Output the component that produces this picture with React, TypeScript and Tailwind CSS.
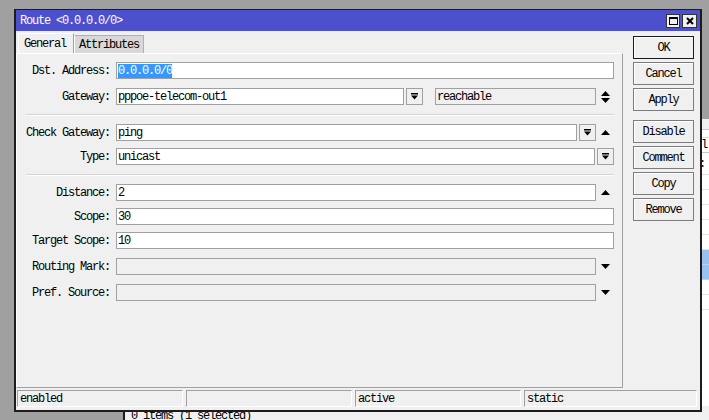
import React from "react";

const mono = "font-['Liberation_Mono',monospace] text-[12px] tracking-[-1.2px] text-black leading-none";

function DropBtn() {
  return (
    <div className="w-[17px] h-[17px] shrink-0 border border-[#a0a0a0] bg-[#f0f0f0] flex items-center justify-center">
      <svg width="7" height="7" viewBox="0 0 7 7">
        <rect x="0" y="0" width="7" height="1.5" fill="#000" />
        <path d="M0 2.5H7L3.5 6.5Z" fill="#000" />
      </svg>
    </div>
  );
}

function Arrow({ dir }: { dir: "up" | "down" | "both" }) {
  return (
    <div className="w-[18px] h-[17px] shrink-0 flex items-center justify-center">
      {dir === "up" && (
        <svg width="9" height="5" viewBox="0 0 9 5">
          <path d="M0 5L4.5 0L9 5Z" fill="#000" />
        </svg>
      )}
      {dir === "down" && (
        <svg width="9" height="5" viewBox="0 0 9 5">
          <path d="M0 0H9L4.5 5Z" fill="#000" />
        </svg>
      )}
      {dir === "both" && (
        <svg width="9" height="12" viewBox="0 0 9 12">
          <path d="M0 5L4.5 0L9 5Z" fill="#000" />
          <path d="M0 7H9L4.5 12Z" fill="#000" />
        </svg>
      )}
    </div>
  );
}

function Input({ value, disabled, className = "flex-1" }: { value?: React.ReactNode; disabled?: boolean; className?: string }) {
  return (
    <div
      className={`${className} h-[17px] border border-[#a0a0a0] flex items-center pl-[1px] overflow-hidden whitespace-nowrap ${
        disabled ? "bg-[#f0f0f0]" : "bg-white"
      }`}
    >
      {value}
    </div>
  );
}

function Row({ label, children, className = "" }: { label: string; children: React.ReactNode; className?: string }) {
  return (
    <div className={`flex items-center h-[17px] ${className}`}>
      <span className="w-[93px] mr-[6px] text-right whitespace-nowrap">{label}</span>
      {children}
    </div>
  );
}

function Separator({ className = "" }: { className?: string }) {
  return <div className={`ml-[9px] h-[2px] border-t border-[#d4d4d4] border-b border-b-white ${className}`} />;
}

function Button({ label, primary, className = "" }: { label: string; primary?: boolean; className?: string }) {
  return (
    <div
      className={`h-[23px] border ${
        primary ? "border-[#1a1a1a]" : "border-[#7c7c7c]"
      } bg-[#f0f0f0] shadow-[inset_1px_1px_0_#fff] flex items-center justify-center ${className}`}
    >
      {label}
    </div>
  );
}

function StatusCell({ text, className = "w-[166px]" }: { text?: string; className?: string }) {
  return (
    <div className={`${className} h-[17px] border border-t-[#a0a0a0] border-l-[#a0a0a0] border-r-white border-b-white flex items-center pl-[2px]`}>
      {text}
    </div>
  );
}

// list window sitting behind the dialog, only its edges show
function BackWindow() {
  const rows = Array.from({ length: 9 });
  return (
    <div className="absolute left-[123px] top-[119px] w-[620px] h-[320px] border-l-2 border-[#1c1c1c] bg-[#f0f0f0] flex flex-col">
      <div className="h-[10px] shrink-0" />
      <div className="h-[277px] shrink-0 bg-white border-t border-[#c8c8c8] flex flex-col overflow-hidden">
        <div className="h-[8px] shrink-0 border-b border-[#d8d8d8]" />
        <div className="h-[15px] shrink-0 border-b border-[#c8c8c8] flex items-center justify-end pr-[36px]">l</div>
        <div className="h-[22px] shrink-0 border-b border-[#e0e0e0] flex items-center justify-end pr-[38px]">:</div>
        {rows.map((_, i) => (
          <div
            key={i}
            className={`h-[15px] shrink-0 border-b ${
              i === 5 || i === 6 ? "bg-[#99c2f0] border-[#b8d4f4]" : "border-[#e4e4e4]"
            }`}
          />
        ))}
      </div>
      <div className="pl-[6px] pt-[4px]">0 items (1 selected)</div>
    </div>
  );
}

export default function App() {
  return (
    <div className={`relative w-[709px] h-[420px] overflow-hidden bg-[#a0a0a0] ${mono}`}>
      <BackWindow />

      <div className="absolute left-[14px] top-[9px] w-[688px] h-[403px] border-x-2 border-b-2 border-t border-[#1c1c1c] bg-[#f0f0f0] flex flex-col">
        {/* title bar */}
        <div className="h-[21px] shrink-0 bg-[#4d50cd] flex items-center pl-[4px] pr-[3px] text-white">
          <span className="flex-1 pt-[1px]">Route &lt;0.0.0.0/0&gt;</span>
          <div className="flex gap-[2px]">
            <div className="w-[14px] h-[14px] border border-[#333] bg-[#f0f0f0] flex items-center justify-center">
              <div className="w-[9px] h-[8px] border border-t-2 border-black" />
            </div>
            <div className="w-[15px] h-[14px] border border-[#333] bg-[#f0f0f0] flex items-center justify-center">
              <svg width="8" height="8" viewBox="0 0 8 8">
                <path d="M1 1L7 7M7 1L1 7" stroke="#000" strokeWidth="2" />
              </svg>
            </div>
          </div>
        </div>

        {/* body */}
        <div className="h-[357px] shrink-0 flex">
          <div className="w-[607px] flex flex-col pt-[2px]">
            <div className="h-[20px] flex items-end pl-[2px]">
              <div className="w-[56px] h-[20px] border-t border-l border-white border-r border-r-[#a0a0a0] bg-[#f0f0f0] flex items-center pl-[5px]">
                General
              </div>
              <div className="w-[70px] h-[18px] border-t border-r border-[#b0b0b0] border-l border-l-white bg-[#d8d8d8] flex items-center pl-[4px] pt-[1px]">
                Attributes
              </div>
            </div>

            <div className="flex-1 border-t border-l border-white border-r border-b border-r-[#a0a0a0] border-b-[#a0a0a0] pt-[8px] pr-[8px] flex flex-col">
              <Row label="Dst. Address:">
                <Input
                  value={<span className="bg-[#3399ff] text-white h-[14px] flex items-center">0.0.0.0/0</span>}
                />
              </Row>
              <Row label="Gateway:" className="mt-[9px]">
                <Input className="w-[288px]" value="pppoe-telecom-out1" />
                <div className="ml-[2px]">
                  <DropBtn />
                </div>
                <div className="ml-[12px] flex-1 h-[17px] border border-[#a0a0a0] bg-[#f0f0f0] flex items-center pl-[1px]">
                  reachable
                </div>
                <Arrow dir="both" />
              </Row>

              <Separator className="mt-[9px]" />

              <Row label="Check Gateway:" className="mt-[8px]">
                <Input value="ping" />
                <div className="ml-[2px]">
                  <DropBtn />
                </div>
                <Arrow dir="up" />
              </Row>
              <Row label="Type:" className="mt-[7px]">
                <Input value="unicast" />
                <div className="ml-[2px]">
                  <DropBtn />
                </div>
              </Row>

              <Separator className="mt-[9px]" />

              <Row label="Distance:" className="mt-[8px]">
                <Input value="2" />
                <Arrow dir="up" />
              </Row>
              <Row label="Scope:" className="mt-[7px]">
                <Input value="30" />
              </Row>
              <Row label="Target Scope:" className="mt-[7px]">
                <Input value="10" />
              </Row>
              <Row label="Routing Mark:" className="mt-[9px]">
                <Input disabled />
                <Arrow dir="down" />
              </Row>
              <Row label="Pref. Source:" className="mt-[9px]">
                <Input disabled />
                <Arrow dir="down" />
              </Row>
            </div>
          </div>

          {/* buttons */}
          <div className="ml-[10px] w-[61px] pt-[5px] flex flex-col gap-[3px]">
            <Button label="OK" primary />
            <Button label="Cancel" />
            <Button label="Apply" />
            <Button label="Disable" className="mt-[6px]" />
            <Button label="Comment" />
            <Button label="Copy" />
            <Button label="Remove" />
          </div>
        </div>

        {/* status bar */}
        <div className="h-[17px] mt-[2px] mb-[3px] ml-[1px] mr-[3px] flex gap-[3px]">
          <StatusCell text="enabled" />
          <StatusCell />
          <StatusCell text="active" />
          <StatusCell text="static" className="flex-1" />
        </div>
      </div>
    </div>
  );
}
